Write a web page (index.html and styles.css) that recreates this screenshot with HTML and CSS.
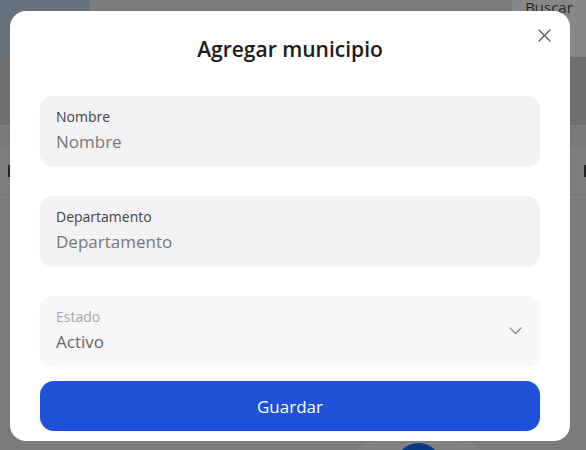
FILE: index.html
```html
<!DOCTYPE html>
<html lang="es">
<head>
<meta charset="utf-8">
<title>Agregar municipio</title>
<link rel="stylesheet" href="styles.css">
</head>
<body>
<div class="page">
  <header class="topbar">
    <div class="brand"></div>
    <div class="topbar-fill"></div>
    <button class="search-btn" type="button">Buscar</button>
  </header>
  <div class="toolbar"></div>
  <div class="strip"></div>
  <div class="thead"><span class="mark"></span><span class="mark"></span></div>
  <div class="rows"></div>
  <div class="footer">
    <div class="pager"><span class="pager-dot"></span></div>
  </div>
</div>

<div class="overlay"></div>

<div class="modal" role="dialog" aria-labelledby="modal-title">
  <button class="close-btn" type="button" aria-label="Cerrar">
    <svg width="13" height="13" viewBox="0 0 13 13"><path d="M1 1 L12 12 M12 1 L1 12" stroke="#5a5a5a" stroke-width="1.4" stroke-linecap="round" fill="none"/></svg>
  </button>
  <h2 class="modal-title" id="modal-title">Agregar municipio</h2>
  <form class="form">
    <div class="fields">
      <label class="field">
        <span class="field-label">Nombre</span>
        <span class="field-value">Nombre</span>
      </label>
      <label class="field">
        <span class="field-label">Departamento</span>
        <span class="field-value">Departamento</span>
      </label>
      <label class="field field-select">
        <span class="field-text">
          <span class="field-label">Estado</span>
          <span class="field-value">Activo</span>
        </span>
        <svg class="chevron" width="13" height="8" viewBox="0 0 13 8"><path d="M1 1 L6.5 6.5 L12 1" stroke="#8a8a8a" stroke-width="1.3" fill="none" stroke-linecap="round" stroke-linejoin="round"/></svg>
      </label>
    </div>
    <button class="save-btn" type="button">Guardar</button>
  </form>
</div>
</body>
</html>
```

FILE: styles.css
```css
* { box-sizing: border-box; }

html, body {
  margin: 0;
  height: 100%;
  overflow: hidden;
  font-family: "Open Sans", "Noto Sans", sans-serif;
}

.page {
  height: 450px;
  display: flex;
  flex-direction: column;
  background: #e8e8e8;
}

.topbar {
  height: 57px;
  display: flex;
}

.brand {
  width: 90px;
  background: #c0d7ee;
}

.topbar-fill {
  flex: 1;
  background: #e8e8e8;
}

.search-btn {
  width: 74px;
  border: 0;
  margin: 0;
  padding: 0;
  background: #ffffff;
  color: #4a4a4a;
  font-family: inherit;
  font-size: 15px;
  line-height: 15px;
  text-align: center;
  align-self: stretch;
  display: flex;
  justify-content: center;
  align-items: flex-start;
}

.toolbar {
  height: 68px;
  background: #d2d2d2;
}

.strip {
  height: 23px;
  background: #e4e4e4;
  border-top: 1px solid #ececec;
}

.thead {
  height: 47px;
  background: #ececec;
  display: flex;
  justify-content: space-between;
  align-items: center;
  padding: 0 0 0 8px;
  border-bottom: 1px solid #dcdcdc;
}

.mark {
  width: 2px;
  height: 12px;
  background: #444;
}

.rows {
  flex: 1;
  background: #e8e8e8;
}

.footer {
  height: 9px;
  overflow: hidden;
  padding-left: 351px;
  background: #e8e8e8;
}

.pager {
  width: 135px;
  height: 51px;
  border-radius: 26px;
  background: #f4f4f4;
  display: flex;
  justify-content: center;
  padding-top: 2px;
}

.pager-dot {
  width: 47px;
  height: 47px;
  border-radius: 50%;
  background: #0d6efd;
}

.overlay {
  position: fixed;
  inset: 0;
  background: rgba(0, 0, 0, 0.47);
}

.modal {
  position: fixed;
  left: 10px;
  top: 11px;
  width: 560px;
  height: 430px;
  background: #ffffff;
  border-radius: 16px;
  padding: 24px 30px 0;
}

.close-btn {
  position: absolute;
  top: 18px;
  right: 19px;
  width: 13px;
  height: 13px;
  padding: 0;
  border: 0;
  background: none;
  display: block;
}

.close-btn svg { display: block; }

.modal-title {
  margin: 0 0 33px;
  font-size: 21px;
  line-height: 28px;
  font-weight: 600;
  color: #1b1b1b;
  text-align: center;
}

.form {
  display: flex;
  flex-direction: column;
}

.fields {
  display: flex;
  flex-direction: column;
  gap: 30px;
}

.field {
  height: 70px;
  border-radius: 13px;
  background: #f2f2f4;
  box-shadow: 0 1px 2px rgba(0, 0, 0, 0.04);
  padding: 12px 16px 0;
  display: flex;
  flex-direction: column;
}

.field-label {
  font-size: 14px;
  line-height: 18px;
  color: #444;
}

.field-value {
  margin-top: 4px;
  font-size: 17px;
  line-height: 24px;
  color: #777;
}

.field-select {
  flex-direction: row;
  align-items: flex-start;
  justify-content: space-between;
  background: #f7f7f9;
  padding-right: 18px;
}

.field-text {
  display: flex;
  flex-direction: column;
}

.field-select .field-label { color: #a6a6a6; }
.field-select .field-value { color: #666; }

.chevron {
  align-self: center;
  margin-top: -12px;
}

.save-btn {
  margin-top: 15px;
  height: 50px;
  border: 0;
  border-radius: 14px;
  background: #1e50d8;
  color: #ffffff;
  font-family: inherit;
  font-size: 17px;
  font-weight: 400;
}
```
